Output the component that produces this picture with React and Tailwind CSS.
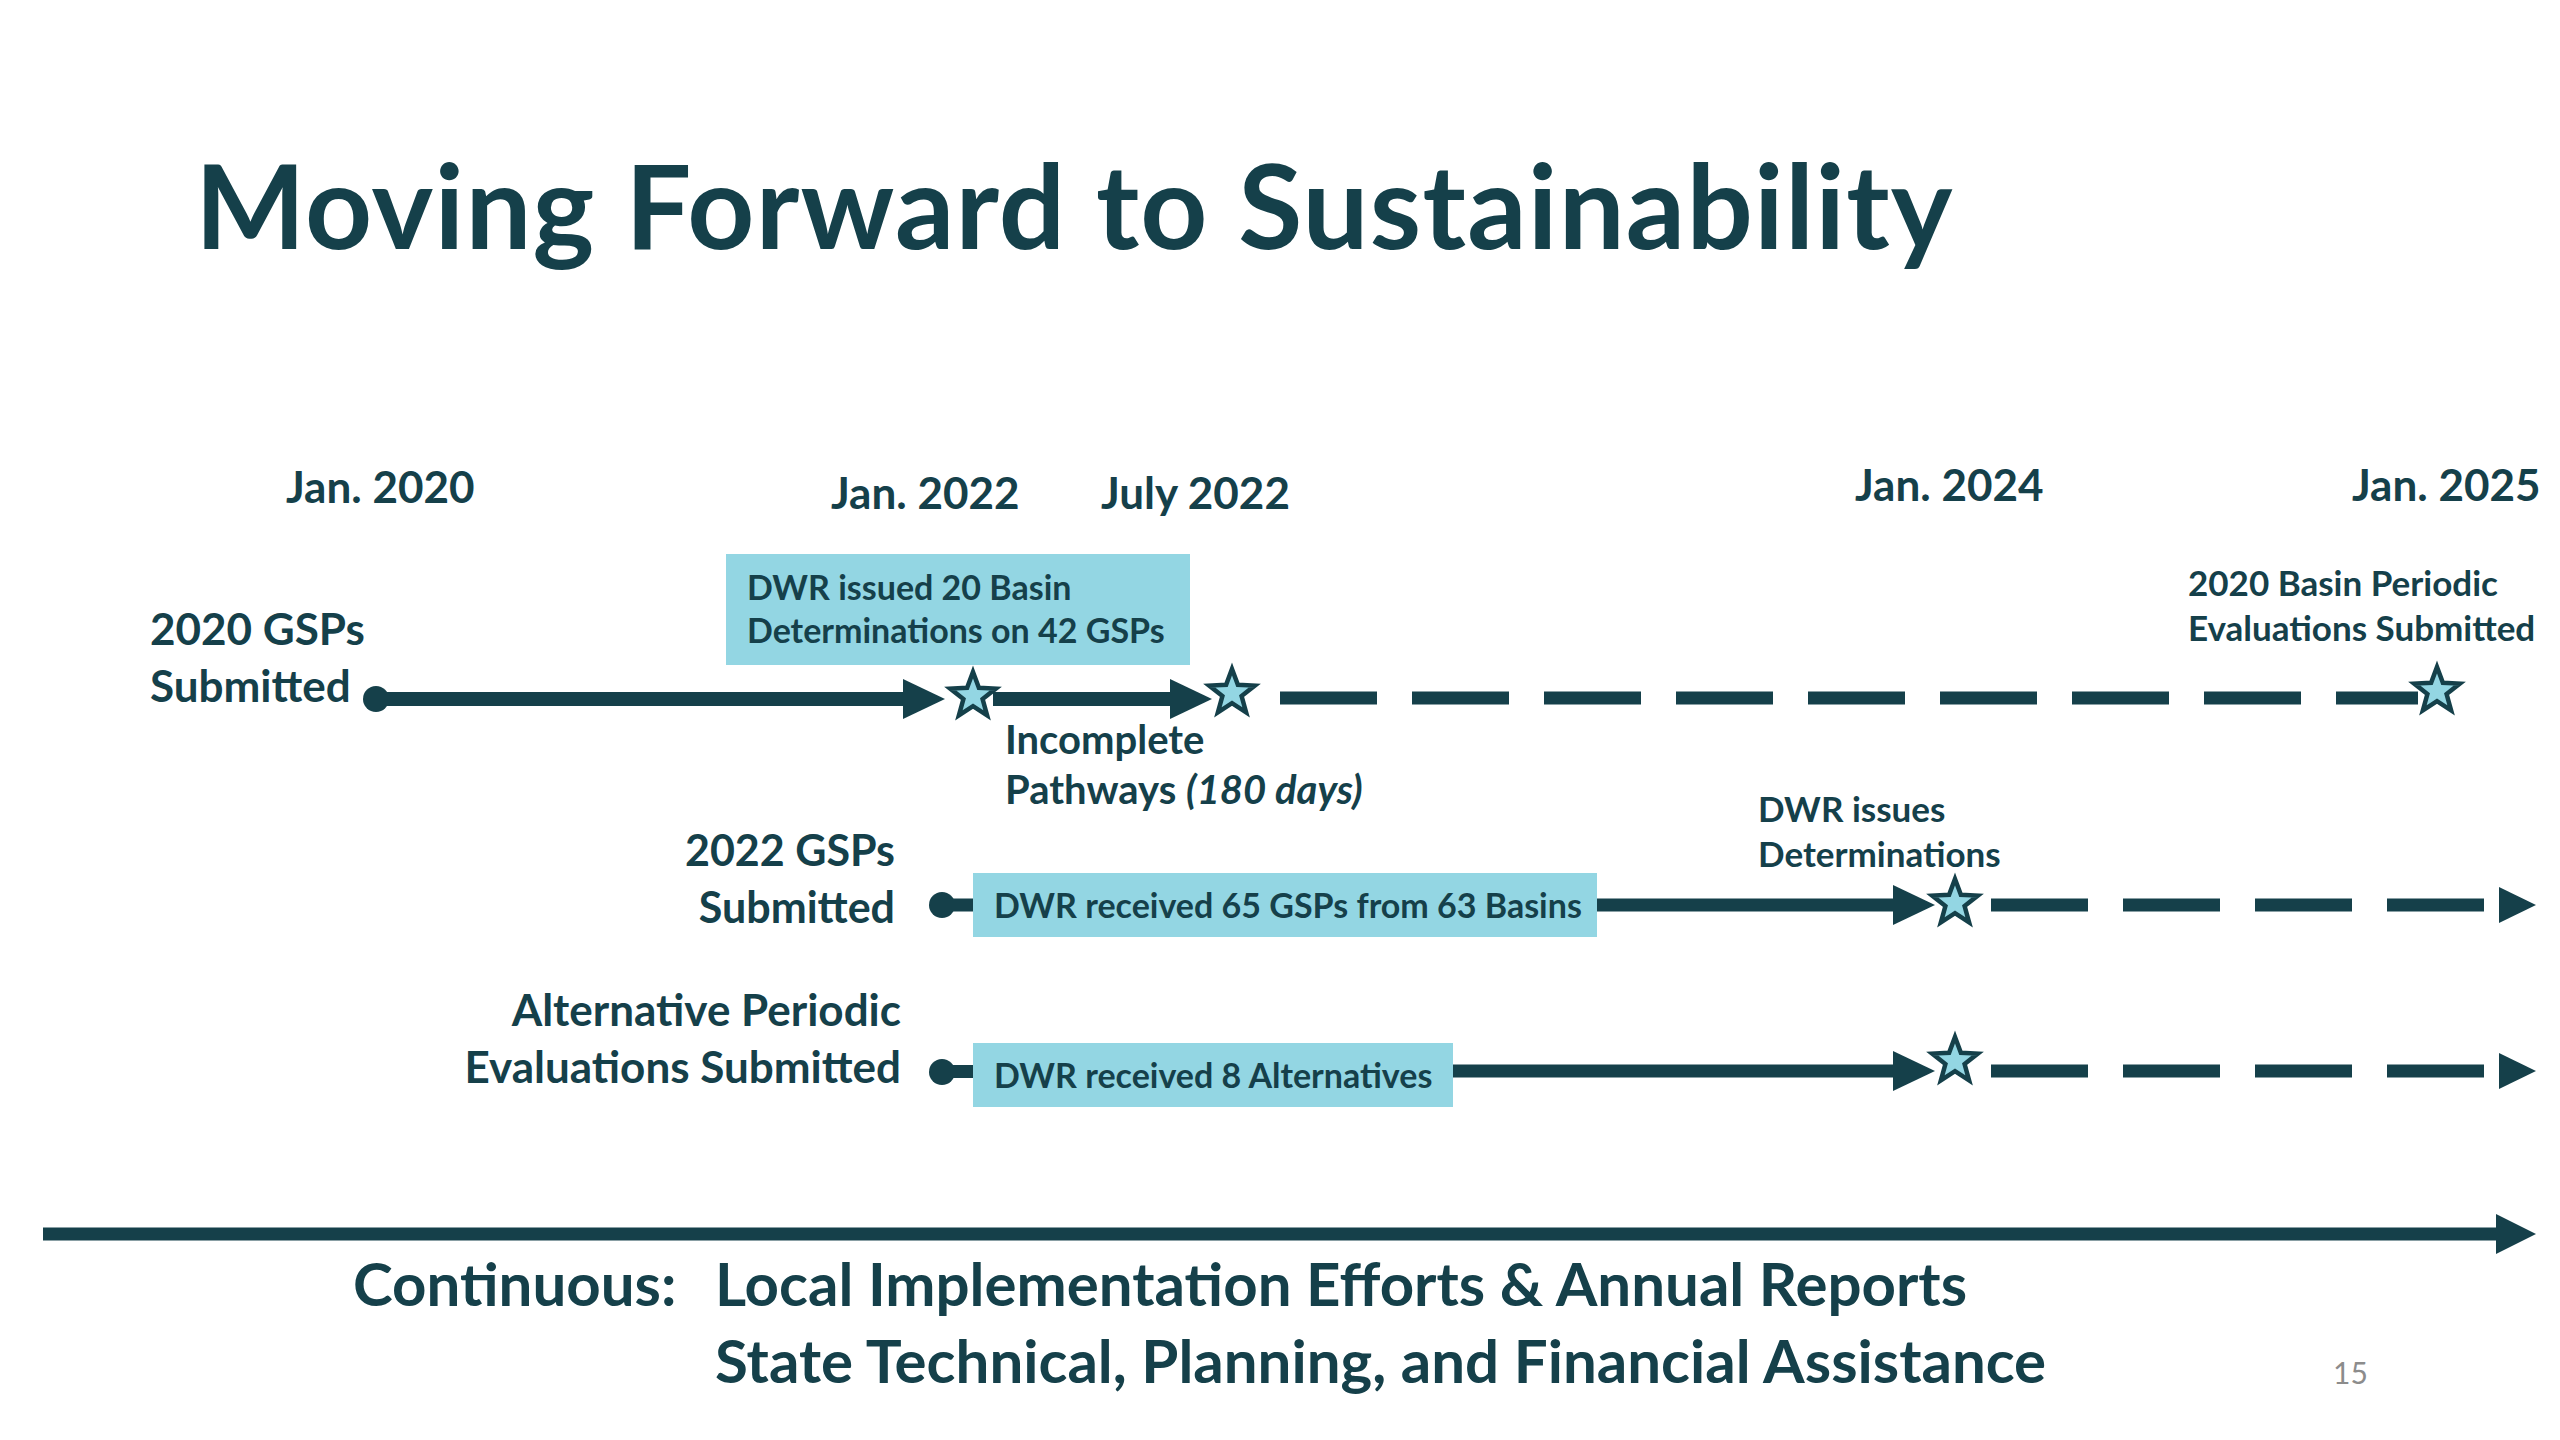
const DARK = '#15404a';
const LIGHT = '#93d6e3';

// 5 point star, pointing up
function starPoints(cx, cy, R, ratio = 0.42) {
  const pts = [];
  for (let i = 0; i < 10; i++) {
    const r = i % 2 === 0 ? R : R * ratio;
    const a = -Math.PI / 2 + (i * Math.PI) / 5;
    pts.push(`${(cx + r * Math.cos(a)).toFixed(1)},${(cy + r * Math.sin(a)).toFixed(1)}`);
  }
  return pts.join(' ');
}

function Star({ cx, cy }) {
  return (
    <polygon
      points={starPoints(cx, cy, 24)}
      fill={LIGHT}
      stroke={DARK}
      strokeWidth="4.5"
      strokeLinejoin="miter"
    />
  );
}

function Dashes({ start, count, y }) {
  return Array.from({ length: count }).map((_, k) => (
    <rect key={k} x={start + 132 * k} y={y - 6.5} width="97" height="13" fill={DARK} />
  ));
}

function Timeline() {
  return (
    <svg className="absolute inset-0 h-full w-full" viewBox="0 440 2560 774">
      {/* 2020 GSPs */}
      <circle cx="376" cy="699" r="13" fill={DARK} />
      <rect x="376" y="692" width="530" height="14" fill={DARK} />
      <polygon points="903,679 945,699 903,719" fill={DARK} />
      <rect x="993" y="692" width="180" height="14" fill={DARK} />
      <polygon points="1170,679 1212,699 1170,719" fill={DARK} />
      <Dashes start={1280} count={8} y={698} />
      <rect x="2336" y="691.5" width="82" height="13" fill={DARK} />
      <Star cx={973} cy={696} />
      <Star cx={1232} cy={693} />
      <Star cx={2437} cy={691} />

      {/* 2022 GSPs */}
      <circle cx="942" cy="905" r="13" fill={DARK} />
      <rect x="942" y="898.5" width="40" height="13" fill={DARK} />
      <rect x="1590" y="898.5" width="306" height="13" fill={DARK} />
      <polygon points="1893,885 1935,905 1893,925" fill={DARK} />
      <Dashes start={1991} count={4} y={905} />
      <polygon points="2499,887 2536,905 2499,923" fill={DARK} />
      <Star cx={1955} cy={903} />

      {/* Alternatives */}
      <circle cx="942" cy="1072" r="13" fill={DARK} />
      <rect x="942" y="1065" width="40" height="13" fill={DARK} />
      <rect x="1445" y="1064.5" width="451" height="13" fill={DARK} />
      <polygon points="1893,1051 1935,1071 1893,1091" fill={DARK} />
      <Dashes start={1991} count={4} y={1071} />
      <polygon points="2499,1053 2536,1071 2499,1089" fill={DARK} />
      <Star cx={1955} cy={1061} />
    </svg>
  );
}

export default function App() {
  return (
    <div className="relative flex h-[1440px] w-[2560px] flex-col overflow-hidden bg-white font-['Lato',sans-serif] font-bold text-[#15404a]">
      <div className="h-[440px] pl-[195px] pt-[146px]">
        <h1 className="whitespace-nowrap text-[117px] font-bold leading-none tracking-[1.2px]">Moving Forward to Sustainability</h1>
      </div>

      <div className="relative h-[774px] whitespace-nowrap">
        <Timeline />

        <div className="absolute left-[286px] top-[24px] text-[44px] leading-none">Jan. 2020</div>
        <div className="absolute left-[831px] top-[30px] text-[44px] leading-none">Jan. 2022</div>
        <div className="absolute left-[1101px] top-[30px] text-[44px] leading-none">July 2022</div>
        <div className="absolute left-[1855px] top-[22px] text-[44px] leading-none">Jan. 2024</div>
        <div className="absolute left-[2352px] top-[22px] text-[44px] leading-none">Jan. 2025</div>

        <div className="absolute left-[150px] top-[160px] text-[44px] leading-[57px]">
          <p>2020 GSPs</p>
          <p>Submitted</p>
        </div>

        <div className="absolute left-[726px] top-[114px] h-[111px] w-[464px] bg-[#93d6e3] pl-[21px] pt-[11px] text-[34px] leading-[43px]">
          <p>DWR issued 20 Basin</p>
          <p>Determinations on 42 GSPs</p>
        </div>

        <div className="absolute left-[1005px] top-[274px] text-[40px] leading-[50px]">
          <p>Incomplete</p>
          <p>
            Pathways <span className="italic">(180 days)</span>
          </p>
        </div>

        <div className="absolute left-[2188px] top-[120px] text-[35px] leading-[45px]">
          <p>2020 Basin Periodic</p>
          <p>Evaluations Submitted</p>
        </div>

        <div className="absolute right-[1665px] top-[381px] text-right text-[43px] leading-[57px]">
          <p>2022 GSPs</p>
          <p>Submitted</p>
        </div>

        <div className="absolute left-[973px] top-[433px] flex h-[64px] w-[624px] items-center bg-[#93d6e3] pl-[21px] text-[34px] leading-none">
          DWR received 65 GSPs from 63 Basins
        </div>

        <div className="absolute left-[1758px] top-[346px] text-[35px] leading-[45px]">
          <p>DWR issues</p>
          <p>Determinations</p>
        </div>

        <div className="absolute right-[1659px] top-[541px] text-right text-[44px] leading-[57px]">
          <p>Alternative Periodic</p>
          <p>Evaluations Submitted</p>
        </div>

        <div className="absolute left-[973px] top-[603px] flex h-[64px] w-[480px] items-center bg-[#93d6e3] pl-[21px] text-[34px] leading-none">
          DWR received 8 Alternatives
        </div>
      </div>

      <svg className="h-[40px] w-[2560px] shrink-0" viewBox="0 1214 2560 40">
        <rect x="43" y="1227.5" width="2460" height="13" fill={DARK} />
        <polygon points="2496,1214 2536,1234 2496,1254" fill={DARK} />
      </svg>

      <div className="relative -mt-[9px] flex whitespace-nowrap pl-[353px] text-[60px] leading-[77px]">
        <div className="w-[362px] shrink-0">Continuous:</div>
        <div>
          <p>Local Implementation Efforts &amp; Annual Reports</p>
          <p>State Technical, Planning, and Financial Assistance</p>
        </div>
        <span className="absolute left-[2333px] top-[112px] text-[30px] font-normal leading-none text-[#8c8c8c]">15</span>
      </div>
    </div>
  );
}
